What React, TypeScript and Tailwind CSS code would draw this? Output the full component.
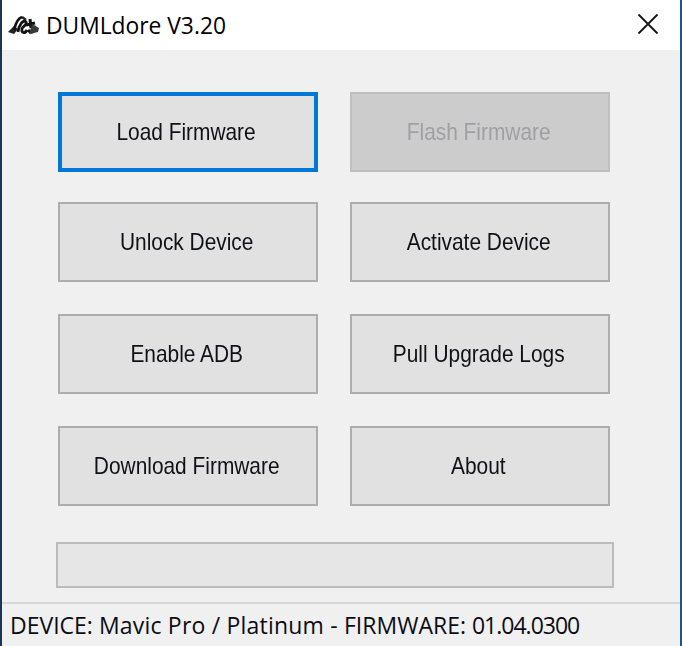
import React from "react";

function Logo() {
  return (
    <svg width="33" height="21" viewBox="0 0 33 21" className="blur-[0.6px] shrink-0" fill="none">
      <path d="M1 17 L7 11 L11 14 L7 19 Z" fill="#222" />
      <path d="M7 15 C9 7 11 3 15 2 M11 17 C12 10 16 4 19 7 C21 10 15 11 15 14 C14 18 18 19 20 15" stroke="#111" strokeWidth="2.8" />
      <path d="M15 2 L19 5" stroke="#222" strokeWidth="2.4" />
      <path d="M23 4 L24 13 M19 10 L28 8 M21 15 C24 19 29 17 27 11" stroke="#111" strokeWidth="3" />
      <path d="M25 9 L32 13 L31 17 L22 19" fill="#3a3a3a" />
    </svg>
  );
}

function WinButton({ label, focused, disabled }: { label: string; focused?: boolean; disabled?: boolean }) {
  let cls = "border-[2px] border-[#adadad] bg-[#e1e1e1] text-[#101018]";
  if (focused) cls = "border-[4px] border-[#0078d7] bg-[#e1e1e1] text-[#101018]";
  if (disabled) cls = "border-[2px] border-[#bfbfbf] bg-[#cccccc] text-[#a0a0a4]";
  return (
    <button className={`w-[260px] h-[80px] flex items-center justify-center pr-[3px] text-[24px] font-['Liberation_Sans',sans-serif] ${cls}`}>
      <span className="block whitespace-nowrap scale-x-[0.87]">{label}</span>
    </button>
  );
}

export default function App() {
  return (
    <div className="w-[682px] h-[646px] flex flex-col overflow-hidden bg-[#f0f0f0] border-l-2 border-r-2 border-l-[#1c3553] border-r-[#1c5680]">
      <div className="h-[50px] bg-white flex items-center shrink-0">
        <div className="ml-[5px] mt-[1px]">
          <Logo />
        </div>
        <span className="ml-[6px] mt-[2px] text-[22.8px] text-[#000] font-['Open_Sans',sans-serif] leading-none">DUMLdore V3.20</span>
        <svg width="22" height="22" viewBox="0 0 22 22" className="ml-auto mr-[21px] mb-[2px]" stroke="#1a1a1a" strokeWidth="2">
          <path d="M1.5 1.5 L20.5 20.5 M20.5 1.5 L1.5 20.5" />
        </svg>
      </div>

      <div className="flex-1 flex flex-col pl-[56px] pt-[42px]">
        <div className="flex gap-[32px]">
          <WinButton label="Load Firmware" focused />
          <WinButton label="Flash Firmware" disabled />
        </div>
        <div className="flex gap-[32px] mt-[30px]">
          <WinButton label="Unlock Device" />
          <WinButton label="Activate Device" />
        </div>
        <div className="flex gap-[32px] mt-[32px]">
          <WinButton label="Enable ADB" />
          <WinButton label="Pull Upgrade Logs" />
        </div>
        <div className="flex gap-[32px] mt-[32px]">
          <WinButton label="Download Firmware" />
          <WinButton label="About" />
        </div>
        <div className="w-[558px] h-[46px] -ml-[2px] mt-[36px] border-[2px] border-[#bcbcbc] bg-[#e6e6e6]" />
      </div>

      <div className="h-[44px] shrink-0 border-t-2 border-[#d7d7d7] pl-[8px] flex items-center text-[23px] text-[#0c0c14] font-['Open_Sans',sans-serif] whitespace-pre">
        <span>DEVICE: </span>
        <span className="tracking-[0.2px]">Mavic Pro / Platinum - </span>
        <span>FIRMWARE: </span>
        <span className="tracking-[-1px]">01.04.0300</span>
      </div>
    </div>
  );
}
